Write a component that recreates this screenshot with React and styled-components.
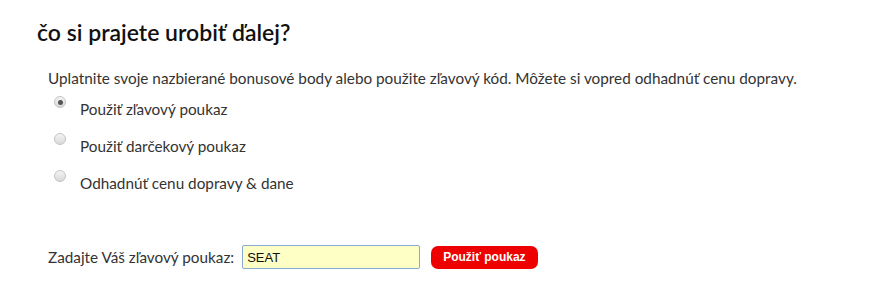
import React, { useState } from 'react';
import styled, { createGlobalStyle } from 'styled-components';

const GlobalStyle = createGlobalStyle`
  body {
    margin: 0;
    background: #fff;
    font-family: Lato, "Open Sans", sans-serif;
    color: #2b2b2b;
  }
`;

const options = [
  { id: 'coupon', label: 'Použiť zľavový poukaz' },
  { id: 'voucher', label: 'Použiť darčekový poukaz' },
  { id: 'shipping', label: 'Odhadnúť cenu dopravy & dane' },
];

const Page = styled.div`
  padding: 17px 37px 0;
`;

const Title = styled.h2`
  margin: 0;
  font-size: 23px;
  font-weight: 600;
  color: #111;
  line-height: 30px;
`;

const Body = styled.div`
  padding: 0 11px;
  margin-top: 21px;
`;

const Intro = styled.p`
  margin: 0;
  font-size: 15.3px;
  line-height: 20px;
  color: #333;
`;

const Options = styled.div`
  display: flex;
  flex-direction: column;
  gap: 15px;
  margin-top: 10px;
  padding-left: 6px;
`;

const Option = styled.label`
  display: flex;
  align-items: flex-start;
  gap: 14px;
  font-size: 15.3px;
  line-height: 22px;
  color: #333;
  cursor: pointer;
`;

const Radio = styled.input`
  appearance: none;
  width: 12px;
  height: 12px;
  margin: -2px 0 0;
  flex: none;
  border-radius: 50%;
  border: 1px solid #c4c4c4;
  background: linear-gradient(#f4f4f4, #d9d9d9);
  box-sizing: border-box;
  display: grid;
  place-items: center;

  &:checked::after {
    content: '';
    width: 5px;
    height: 5px;
    border-radius: 50%;
    background: #555;
  }
`;

const CouponRow = styled.div`
  display: flex;
  align-items: center;
  margin-top: 51px;
`;

const CouponLabel = styled.span`
  font-size: 15.3px;
  color: #333;
  margin-right: 8px;
`;

const CouponInput = styled.input`
  width: 178px;
  height: 24px;
  box-sizing: border-box;
  border: 1px solid #88a9d3;
  border-radius: 2px;
  background: #fdffc4;
  padding: 0 4px;
  font-family: "Liberation Sans", Arial, sans-serif;
  font-size: 13px;
  color: #111;
  outline: none;
`;

const ApplyButton = styled.button`
  margin-left: 11px;
  height: 23px;
  padding: 0 12px;
  border: none;
  border-radius: 7px;
  background: #ee0000;
  color: #fff;
  font-family: "Liberation Sans", Arial, sans-serif;
  font-size: 12px;
  font-weight: bold;
  cursor: pointer;
`;

export default function App() {
  const [selected, setSelected] = useState('coupon');
  const [code, setCode] = useState('SEAT');

  return (
    <Page>
      <GlobalStyle />
      <Title>čo si prajete urobiť ďalej?</Title>
      <Body>
        <Intro>
          Uplatnite svoje nazbierané bonusové body alebo použite zľavový kód. Môžete si vopred odhadnúť cenu dopravy.
        </Intro>
        <Options>
          {options.map((o) => (
            <Option key={o.id}>
              <Radio
                type="radio"
                name="next"
                checked={selected === o.id}
                onChange={() => setSelected(o.id)}
              />
              <span>{o.label}</span>
            </Option>
          ))}
        </Options>
        <CouponRow>
          <CouponLabel>Zadajte Váš zľavový poukaz:</CouponLabel>
          <CouponInput value={code} onChange={(e) => setCode(e.target.value)} />
          <ApplyButton>Použiť poukaz</ApplyButton>
        </CouponRow>
      </Body>
    </Page>
  );
}
